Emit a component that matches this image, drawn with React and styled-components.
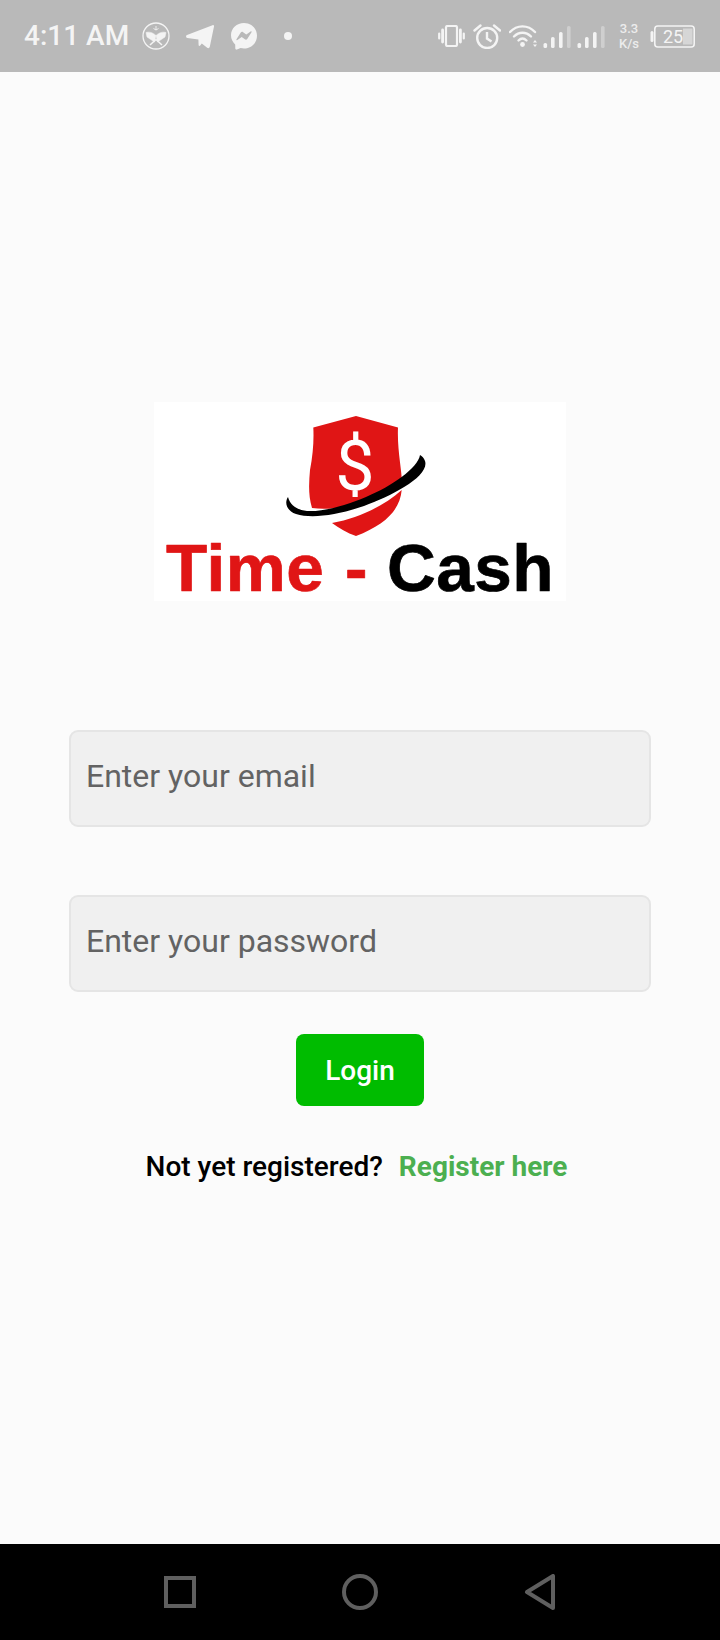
import React from 'react'
import styled, { createGlobalStyle } from 'styled-components'

const GlobalStyle = createGlobalStyle`
  html, body {
    margin: 0;
    padding: 0;
    background: #fbfbfb;
    font-family: Roboto, "Liberation Sans", sans-serif;
  }
  * { box-sizing: border-box; }
`

const Screen = styled.div`
  width: 720px;
  height: 1640px;
  display: flex;
  flex-direction: column;
  background: #fbfbfb;
`

const StatusBar = styled.div`
  height: 72px;
  flex: none;
  background: #b9b9b9;
  color: #f4f4f4;
  display: flex;
  align-items: center;
  padding: 0 25px 0 24px;
`

const Clock = styled.span`
  font-size: 28px;
  font-weight: 500;
  line-height: 32px;
  width: 118px;
  white-space: nowrap;
`

const StatusIcon = styled.svg`
  flex: none;
  display: block;
  margin-left: ${p => p.$gap || 0}px;
`

const Spacer = styled.div`
  flex: 1;
`

const Speed = styled.div`
  width: 20px;
  margin: 0 11px 0 14px;
  font-size: 13px;
  font-weight: 500;
  line-height: 15px;
  text-align: center;
  color: #ececec;
  white-space: nowrap;
`

const Main = styled.main`
  flex: 1;
  display: flex;
  flex-direction: column;
  align-items: center;
  padding-top: 330px;
`

const Logo = styled.svg`
  display: block;
  background: #ffffff;
  overflow: visible;
`

const LogoWord = styled.text`
  font-family: "Liberation Sans", Arial, sans-serif;
  font-size: 67.5px;
  font-weight: 700;
  letter-spacing: 0.5px;
  stroke-width: 0.7px;
  stroke-linejoin: round;
  fill: ${p => p.$color};
  stroke: ${p => p.$color};
`

const LogoDollar = styled.text`
  font-family: Roboto, sans-serif;
  font-size: 70px;
  fill: #fff;
  text-anchor: middle;
`

const Form = styled.form`
  width: 582px;
  margin-top: 129px;
  display: flex;
  flex-direction: column;
  align-items: center;
`

const Field = styled.input`
  width: 100%;
  height: 97px;
  margin-bottom: 68px;
  padding: 0 15px 6px;
  border: 2px solid #e5e5e5;
  border-radius: 9px;
  background: #f0f0f0;
  font-family: Roboto, sans-serif;
  font-size: 32px;
  color: #000;
  outline: none;

  &:last-of-type {
    margin-bottom: 42px;
  }

  &::placeholder {
    color: #636363;
    opacity: 1;
  }
`

const LoginButton = styled.button`
  width: 128px;
  height: 72px;
  border: none;
  border-radius: 8px;
  background: #00bc00;
  color: #fff;
  font-family: Roboto, sans-serif;
  font-size: 28px;
  font-weight: 500;
`

const RegisterRow = styled.p`
  margin: 45px 7px 0 0;
  display: flex;
  gap: 16px;
  font-size: 28px;
  line-height: 32px;
  font-weight: 500;
  color: #000;
  white-space: nowrap;
`

const RegisterLink = styled.a`
  color: #4caf50;
  font-weight: 700;
  text-decoration: none;
`

const NavBar = styled.nav`
  height: 96px;
  flex: none;
  background: #000;
  display: flex;
  align-items: center;
  justify-content: center;
  gap: 146px;
`

const NavIcon = styled.svg`
  display: block;
  fill: none;
  stroke: #5f5f5f;
  stroke-width: 4px;
`

function BookBadge() {
  return (
    <StatusIcon width="28" height="28" viewBox="0 0 28 28" fill="none" stroke="#f4f4f4">
      <circle cx="14" cy="14" r="13" strokeWidth="1.3" />
      <path d="M14 13.5 C11 10.5 7 9.5 4 10.5 L5 15 L12.5 20 Z M14 13.5 C17 10.5 21 9.5 24 10.5 L23 15 L15.5 20 Z" fill="#f4f4f4" strokeWidth="0.5" />
      <path d="M8 23 L14 17.5 L20 23" strokeWidth="1.6" />
      <path d="M14 4 v4 M11.5 6.5 q2.5 3 5 0" strokeWidth="0.9" />
    </StatusIcon>
  )
}

function Telegram() {
  return (
    <StatusIcon $gap={16} width="28" height="25" viewBox="0 0 28 25" fill="#f4f4f4">
      <path d="M1 11 L26.5 1.2 C27.6 .8 28.2 1.4 28 2.4 L23.8 22.8 C23.5 24.2 22.2 24.6 21.2 23.8 L15.8 19.4 L14.2 21.6 C13.6 22.4 12.6 22 12.6 21 L12.4 15.4 L1.4 14 C-.2 13.6 -.4 11.7 1 11 Z" />
    </StatusIcon>
  )
}

function Messenger() {
  return (
    <StatusIcon $gap={17} width="26" height="27" viewBox="0 0 26 27" fill="#f4f4f4">
      <path d="M13 0 C5.8 0 0 5.3 0 12.3 C0 16 1.6 19.1 4.2 21.4 L4.3 25.5 C4.4 26.4 5.2 26.9 6 26.6 L9.6 25 C10.7 25.3 11.8 25.5 13 25.5 C20.2 25.5 26 19.8 26 12.7 C26 5.3 20.2 0 13 0 Z" />
      <path d="M5.5 16.2 L9.6 9.7 C10.2 8.8 11.3 8.6 12.1 9.2 L15.3 11.6 L19.6 8.4 C20.2 8 20.9 8.7 20.5 9.3 L16.4 15.8 C15.8 16.7 14.7 16.9 13.9 16.3 L10.7 13.9 L6.4 17.1 C5.8 17.5 5.1 16.8 5.5 16.2 Z" fill="#b9b9b9" />
    </StatusIcon>
  )
}

function Vibrate() {
  return (
    <StatusIcon width="27" height="22" viewBox="0 0 27 22" fill="none" stroke="#f4f4f4" strokeWidth="2.2" strokeLinecap="round">
      <rect x="8" y="1" width="11" height="20" rx="1.5" />
      <path d="M4.6 5 v12 M22.4 5 v12" strokeWidth="2.8" />
      <path d="M1.2 8.5 v5 M25.8 8.5 v5" strokeWidth="2.2" />
    </StatusIcon>
  )
}

function Alarm() {
  return (
    <StatusIcon $gap={8} width="28" height="25" viewBox="0 0 28 25" fill="none" stroke="#f4f4f4" strokeWidth="2.4">
      <circle cx="14.2" cy="14" r="10" />
      <path d="M14 8 v6.5 l4.5 3" />
      <path d="M1.5 6.5 L7.5 1.5 M27 6.5 L21 1.5" strokeLinecap="round" />
    </StatusIcon>
  )
}

function WifiSignal() {
  return (
    <StatusIcon $gap={8} width="28" height="24" viewBox="0 0 28 24" fill="none" stroke="#f4f4f4" strokeWidth="2.4" strokeLinecap="round">
      <path d="M1 8 C8 .5 19 .5 26 8" />
      <path d="M5 12.5 C10 7.5 17 7.5 22 12.5" />
      <path d="M9.5 16.5 C12 14 15 14 17.5 16.5" />
      <circle cx="13.5" cy="20.5" r="2.4" fill="#f4f4f4" stroke="none" />
      <path d="M26 16 l2 2.4 h-4 Z M26 23 l2 -2.4 h-4 Z" fill="#f4f4f4" stroke="none" />
    </StatusIcon>
  )
}

function Signal({ gap }) {
  return (
    <StatusIcon $gap={gap} width="28" height="24" viewBox="0 0 28 24" fill="#f4f4f4">
      <rect x="0.5" y="19" width="3.6" height="5" rx="1.6" />
      <rect x="8" y="13" width="3.6" height="11" rx="1.6" />
      <rect x="16" y="8" width="3.6" height="16" rx="1.6" />
      <rect x="24" y="2" width="3.6" height="22" rx="1.6" fill="#cfcfcf" />
    </StatusIcon>
  )
}

function Battery() {
  return (
    <StatusIcon width="45" height="23" viewBox="0 0 45 23">
      <rect x="0.5" y="6" width="3" height="11" rx="1.5" fill="#f4f4f4" />
      <rect x="4.8" y="1" width="39.4" height="21" rx="3" fill="none" stroke="#f4f4f4" strokeWidth="1.6" />
      <rect x="33" y="3.5" width="9.5" height="16" fill="#d6d6d6" />
      <text x="13" y="18" fontFamily="Roboto, sans-serif" fontSize="18" fill="#f4f4f4">25</text>
    </StatusIcon>
  )
}

function TimeCashLogo() {
  return (
    <Logo width="412" height="199" viewBox="154 402 412 199">
      <path
        d="M356 416 L398 427.5 C397 450 402 470 402 484 C380 500 340 512 312 508 C308 495 309 482 310 470 C313 455 314 440 313.3 427.5 Z"
        fill="#e01515"
      />
      <path
        d="M332 523 C360 518 385 505 401.7 490 C400 510 385 525 356 536 C347 533 339 528 332 523 Z"
        fill="#e01515"
      />
      <LogoDollar x="355" y="490">$</LogoDollar>
      <path
        d="M288 497 C284 503 287 511 296 514 C312 519 338 515 364 506 C392 496 430 476 425 461 C424 458 422 456 420 455 C418 468 392 486 366 497 C345 506 322 512 307 511 C297 510 290 505 288 497 Z"
        fill="#000"
      />
      <LogoWord x="166" y="591" $color="#e01515">Time</LogoWord>
      <LogoWord x="345" y="591" $color="#e01515">-</LogoWord>
      <LogoWord x="387" y="591" $color="#000">Cash</LogoWord>
    </Logo>
  )
}

export default function App() {
  return (
    <Screen>
      <GlobalStyle />
      <StatusBar>
        <Clock>4:11 AM</Clock>
        <BookBadge />
        <Telegram />
        <Messenger />
        <StatusIcon $gap={27} width="8" height="8" viewBox="0 0 8 8" fill="#f4f4f4">
          <circle cx="4" cy="4" r="4" />
        </StatusIcon>
        <Spacer />
        <Vibrate />
        <Alarm />
        <WifiSignal />
        <Signal gap={6} />
        <Signal gap={6} />
        <Speed>3.3<br />K/s</Speed>
        <Battery />
      </StatusBar>
      <Main>
        <TimeCashLogo />
        <Form>
          <Field type="email" placeholder="Enter your email" />
          <Field type="password" placeholder="Enter your password" />
          <LoginButton type="button">Login</LoginButton>
          <RegisterRow>
            Not yet registered?
            <RegisterLink href="#">Register here</RegisterLink>
          </RegisterRow>
        </Form>
      </Main>
      <NavBar>
        <NavIcon width="32" height="32" viewBox="0 0 32 32">
          <rect x="2" y="2" width="28" height="28" />
        </NavIcon>
        <NavIcon width="36" height="36" viewBox="0 0 36 36">
          <circle cx="18" cy="18" r="16" />
        </NavIcon>
        <NavIcon width="32" height="36" viewBox="0 0 32 36">
          <path d="M29 2 V34 L3 18 Z" strokeLinejoin="round" />
        </NavIcon>
      </NavBar>
    </Screen>
  )
}
